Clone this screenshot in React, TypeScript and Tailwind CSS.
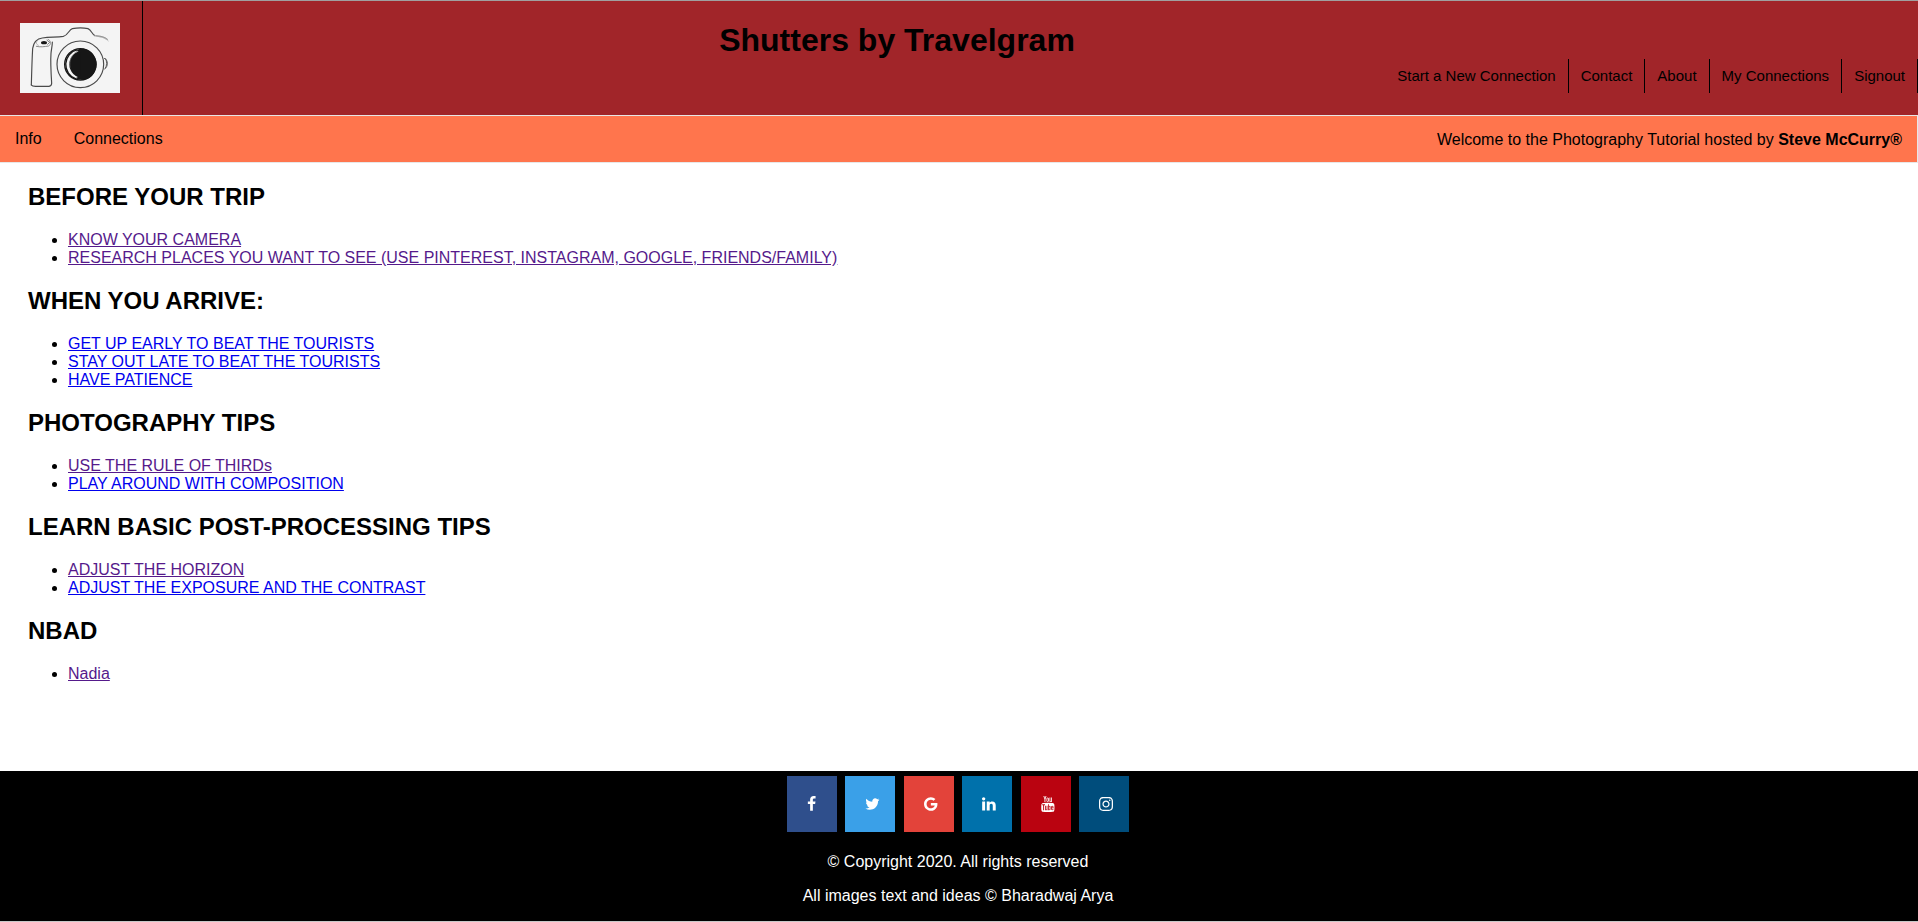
import { Fragment } from "react";
import { FaInstagram } from "react-icons/fa";

const navLinks = ["Start a New Connection", "Contact", "About", "My Connections", "Signout"];

type Topic = { label: string; visited?: boolean };

const sections: { title: string; topics: Topic[] }[] = [
  {
    title: "BEFORE YOUR TRIP",
    topics: [
      { label: "KNOW YOUR CAMERA", visited: true },
      {
        label: "RESEARCH PLACES YOU WANT TO SEE (USE PINTEREST, INSTAGRAM, GOOGLE, FRIENDS/FAMILY)",
        visited: true,
      },
    ],
  },
  {
    title: "WHEN YOU ARRIVE:",
    topics: [
      { label: "GET UP EARLY TO BEAT THE TOURISTS" },
      { label: "STAY OUT LATE TO BEAT THE TOURISTS" },
      { label: "HAVE PATIENCE" },
    ],
  },
  {
    title: "PHOTOGRAPHY TIPS",
    topics: [{ label: "USE THE RULE OF THIRDs", visited: true }, { label: "PLAY AROUND WITH COMPOSITION" }],
  },
  {
    title: "LEARN BASIC POST-PROCESSING TIPS",
    topics: [
      { label: "ADJUST THE HORIZON", visited: true },
      { label: "ADJUST THE EXPOSURE AND THE CONTRAST" },
    ],
  },
  { title: "NBAD", topics: [{ label: "Nadia", visited: true }] },
];

const socials = [
  {
    name: "Facebook",
    color: "bg-[#2f4f8c]",
    viewBox: "384 0 1024 1792",
    path: "M1343 12v264h-157q-86 0-116 36t-30 108v189h293l-39 296h-254v759h-306v-759h-255v-296h255v-218q0-186 104-288.500t277-102.500q147 0 228 12z",
  },
  {
    name: "Twitter",
    color: "bg-[#3aa0e8]",
    viewBox: "64 0 1664 1792",
    path: "M1684 408q-67 98-162 167 1 14 1 42 0 130-38 259.500t-115.500 248.500-184.500 210.500-258 146-323 54.500q-271 0-496-145 35 4 78 4 225 0 401-138-105-2-188-64.500t-114-159.500q33 5 61 5 43 0 85-11-112-23-185.500-111.500t-73.500-205.500v-4q68 38 146 41-66-44-105-115t-39-154q0-88 44-163 121 149 294.500 238.500t371.500 99.500q-8-38-8-74 0-134 94.500-228.500t228.500-94.500q140 0 236 102 109-21 205-78-37 115-142 178 93-10 186-50z",
  },
  {
    name: "Google",
    color: "bg-[#e3433a]",
    viewBox: "128 0 1536 1792",
    path: "M896 786h725q12 67 12 128 0 217-91 387.500t-259.500 266.500-386.500 96q-157 0-299-60.500t-245-163.500-163.500-245-60.500-299 60.500-299 163.500-245 245-163.500 299-60.500q300 0 515 201l-209 201q-123-119-306-119-129 0-238.500 65t-173.500 176.500-64 243.500 64 243.500 173.500 176.500 238.500 65q87 0 160-24t120-60 82-82 51.500-87 22.500-78h-436v-264z",
  },
  {
    name: "LinkedIn",
    color: "bg-[#0071ab]",
    viewBox: "128 0 1536 1792",
    path: "M477 625v991h-330v-991h330zm21-306q1 73-50.500 122t-135.500 49h-2q-82 0-132-49t-50-122q0-74 51.500-122.500t134.500-48.500 133 48.500 51 122.500zm1166 729v568h-329v-530q0-105-40.500-164.500t-126.500-59.500q-63 0-105.500 34.500t-63.500 85.500q-11 30-11 81v553h-329q2-399 2-647t-1-296l-1-48h329v144h-2q20-32 41-56t56.500-52 87-43.500 114.500-15.500q171 0 275 113.500t104 332.500z",
  },
  {
    name: "YouTube",
    color: "bg-[#ba0310]",
    viewBox: "128 0 1536 1792",
    path: "M1099 1244v211q0 67-39 67-23 0-45-22v-301q22-22 45-22 39 0 39 67zm338 1v46h-90v-46q0-68 45-68t45 68zm-966-218h107v-94h-312v94h105v569h100v-569zm288 569h89v-494h-89v378q-30 42-57 42-18 0-21-21-1-3-1-35v-364h-89v391q0 49 8 73 12 37 58 37 48 0 102-61v54zm429-148v-197q0-73-9-99-17-56-71-56-50 0-93 54v-217h-89v663h89v-48q45 55 93 55 54 0 71-55 9-27 9-100zm338-10v-13h-91q0 51-2 61-7 36-40 36-46 0-46-69v-87h179v-103q0-79-27-116-39-51-106-51-68 0-107 51-28 37-28 116v173q0 79 29 116 39 51 108 51 72 0 108-53 18-27 21-54 2-9 2-58zm-608-913v-210q0-69-43-69t-43 69v210q0 70 43 70t43-70zm719 751q0 234-26 350-14 59-58 99t-102 46q-184 21-555 21t-555-21q-58-6-102.500-46t-57.500-99q-26-112-26-350 0-234 26-350 14-59 58-99t103-47q183-20 554-20t555 20q58 7 102.500 47t57.500 99q26 112 26 350zm-998-1276h102l-121 399v271h-100v-271q-14-74-61-212-37-103-65-187h106l71 263zm370 333v175q0 81-28 118-38 51-106 51-67 0-105-51-28-38-28-118v-175q0-80 28-117 38-51 105-51 68 0 106 51 28 37 28 117zm335-162v499h-91v-55q-53 62-103 62-46 0-59-37-8-24-8-75v-394h91v367q0 33 1 35 3 22 21 22 27 0 57-43v-381h91z",
  },
  { name: "Instagram", color: "bg-[#004d7c]", viewBox: "", path: "" },
];

function CameraLogo() {
  return (
    <svg viewBox="0 0 300 210" className="h-[70px] w-[100px]" role="img" aria-label="Camera logo" fill="none">
      <rect width="300" height="210" fill="#f4f4f4" />
      <g stroke="#4a4a4a" strokeWidth="3.500" strokeLinecap="round" strokeLinejoin="round">
        <path d="M34 186C35 148 36 112 38 76C41 57 51 47 67 45C92 42 111 43 130 40C145 37 146 20 157 17C174 14 189 14 204 17C215 21 216 35 225 38" />
        <path d="M34 186C37 191 44 190 51 190H87C93 189 95 186 95 181C93 150 91 119 93 91C94 79 97 69 97 57" />
        <path d="M49 70C61 73 73 71 86 69C94 65 93 51 84 49" strokeWidth="2.500" stroke="#777" />
        <path d="M54 51C47 56 47 64 55 67" strokeWidth="2" stroke="#999" />
        <circle cx="181" cy="124" r="70" />
        <path d="M253 106C265 110 266 130 254 138M257 107C261 117 261 127 256 136" strokeWidth="2.500" />
      </g>
      <path d="M223 37C239 38 256 36 268 58C254 43 240 44 223 40Z" fill="#b0b0b0" />
      <path d="M228 38C243 40 255 41 264 50" stroke="#888" strokeWidth="2" />
      <ellipse cx="72" cy="59" rx="9" ry="5" fill="#161616" />
      <path d="M80 51L89 58L82 65" stroke="#444" strokeWidth="2" />
      <circle cx="181" cy="124" r="47" fill="#f4f4f4" stroke="#161616" strokeWidth="4" />
      <path d="M172 80A46 46 0 0 0 168 168" stroke="#161616" strokeWidth="4" />
      <circle cx="189" cy="124" r="41" fill="#161616" />
      <path d="M168 82C180 74 214 74 224 104V146C212 172 184 174 166 166L182 158V90Z" fill="#161616" />
      <path d="M174 83C153 96 147 113 150 134" stroke="#777" strokeWidth="2" />
    </svg>
  );
}

export default function App() {
  return (
    <div className="flex min-h-screen flex-col bg-white font-['Liberation_Sans',Arial,sans-serif] text-base leading-[18px] text-black">
      <header className="flex border-t border-b border-t-[#a0a0a0] border-b-[#e7e7e7] bg-[#a12529]">
        <a href="#home" className="flex shrink-0 border-r border-black py-[22px] pr-[22px] pl-5">
          <CameraLogo />
        </a>
        <div className="flex grow flex-col">
          <h1 className="mt-5 pr-[267px] text-center text-[32px] leading-[38px] font-bold">
            Shutters by Travelgram
          </h1>
          <nav className="flex justify-end text-[15px]">
            {navLinks.map((label) => (
              <a key={label} href="#nav" className="border-r border-black px-3 py-2">
                {label}
              </a>
            ))}
          </nav>
        </div>
      </header>

      <div className="flex justify-between border-r border-b border-[#e7e7e7] bg-[#ff754d] px-[15px]">
        <nav className="flex gap-8">
          <a href="#info" className="py-[14px]">
            Info
          </a>
          <a href="#connections" className="py-[14px]">
            Connections
          </a>
        </nav>
        <p className="pt-[15px]">
          Welcome to the Photography Tutorial hosted by <strong>Steve McCurry®</strong>
        </p>
      </div>

      <main className="grow px-7">
        {sections.map((section) => (
          <section key={section.title}>
            <h2 className="my-5 text-2xl leading-7 font-bold">{section.title}</h2>
            <ul className="list-disc pl-10">
              {section.topics.map((topic) => (
                <li key={topic.label}>
                  <a
                    href="#topic"
                    className={topic.visited ? "text-[#551a8b] underline" : "text-[#0000ee] underline"}
                  >
                    {topic.label}
                  </a>
                </li>
              ))}
            </ul>
          </section>
        ))}
      </main>

      <footer className="border-b border-[#c8c8c8] bg-black pt-[5px] pr-[2px] pb-4 text-center text-white">
        <div>
          {socials.map((social) => (
            <Fragment key={social.name}>
              <a
                href="#social"
                aria-label={social.name}
                className={`mx-0.5 inline-flex h-14 w-[50px] pt-5 pl-5 align-top ${social.color}`}
              >
                {social.path ? (
                  <svg viewBox={social.viewBox} preserveAspectRatio="xMinYMin meet" className="h-4 w-4" fill="currentColor">
                    <path d={social.path} />
                  </svg>
                ) : (
                  <FaInstagram className="h-4 w-4" preserveAspectRatio="xMinYMin meet" />
                )}
              </a>{" "}
            </Fragment>
          ))}
        </div>
        <p className="mt-[21px]">© Copyright 2020. All rights reserved</p>
        <p className="mt-4">All images text and ideas © Bharadwaj Arya</p>
      </footer>
    </div>
  );
}
